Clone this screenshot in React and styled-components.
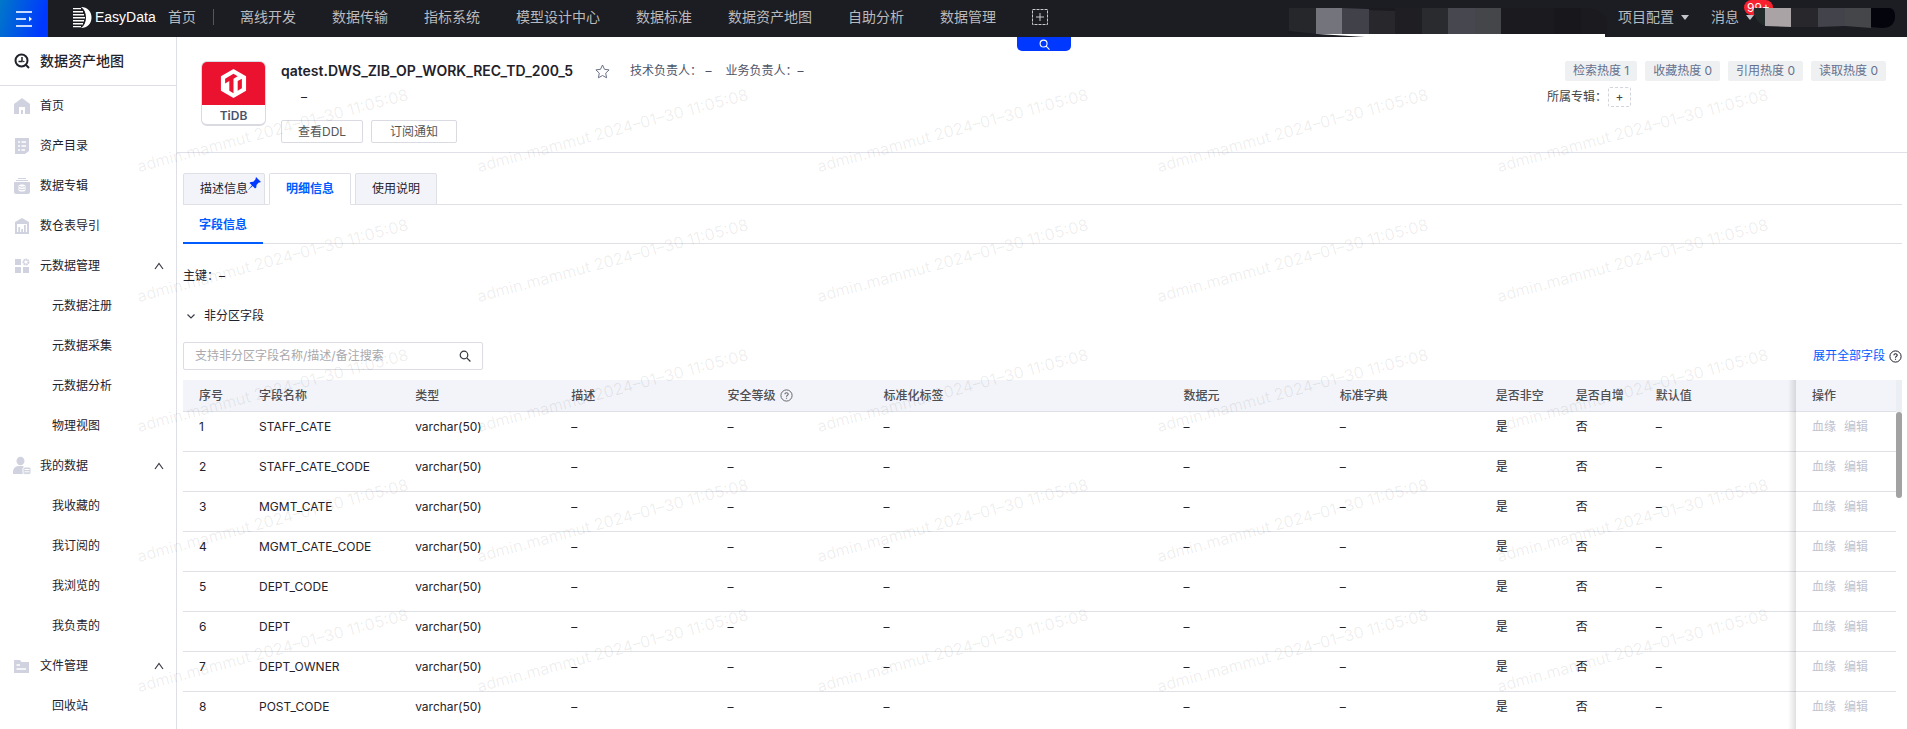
import React from 'react';
import styled, { createGlobalStyle } from 'styled-components';

const GlobalStyle = createGlobalStyle`
  *, *::before, *::after { box-sizing: border-box; }
  body {
    margin: 0;
    background: #fff;
    color: #1f222b;
    font: 12px/20px Inter, "Noto Sans CJK SC", sans-serif;
  }
  button, input { font: inherit; color: inherit; }
  button { padding: 0; border: 0; background: none; cursor: pointer; }
  a { color: inherit; text-decoration: none; }
  svg { display: block; flex: none; }
`;

const Shell = styled.div`
  position: relative;
  display: flex;
  flex-direction: column;
  height: 100vh;
  overflow: hidden;
`;

/* ---------- top bar ---------- */

const TopBar = styled.header`
  display: flex;
  align-items: flex-start;
  flex: none;
  height: 37px;
  background: #1c1d22;
  color: #b9babd;
  font-size: 14px;
  white-space: nowrap;
`;

const MenuButton = styled.button`
  display: flex;
  align-items: center;
  justify-content: center;
  width: 48px;
  height: 37px;
  background: linear-gradient(105deg, #0078c8, #0038ff 85%);
`;

const Brand = styled.a`
  display: flex;
  align-items: center;
  gap: 3px;
  width: 95px;
  height: 34px;
  margin-left: 25px;
  color: #fff;
  font: 14px/24px "Liberation Sans", sans-serif;
`;

const Nav = styled.nav`
  display: flex;
  align-items: center;
  gap: 36px;
  height: 34px;
`;

const HomeLink = styled.a`
  padding-right: 17px;
  margin-right: -10px;
  border-right: 1px solid #55565b;
  line-height: 16px;
`;

const TopRight = styled.div`
  display: flex;
  align-items: flex-start;
  margin-left: auto;
  padding-right: 12px;
  height: 37px;
`;

const DropButton = styled.button`
  position: relative;
  display: flex;
  align-items: center;
  gap: 7px;
  height: 34px;
  margin-left: ${(p) => p.$gap}px;
`;

const Badge = styled.span`
  position: absolute;
  left: 33px;
  top: 0;
  height: 15px;
  padding: 0 3px;
  border-radius: 8px;
  background: #f9202f;
  color: #fff;
  font-size: 12px;
  line-height: 15px;
`;

const UserMask = styled.div`
  position: relative;
`;

/* ---------- side bar ---------- */

const Body = styled.div`
  display: flex;
  flex: 1;
  min-height: 0;
`;

const Side = styled.aside`
  flex: none;
  width: 177px;
  border-right: 1px solid #dfe0e6;
  overflow: hidden;
`;

const SideTitle = styled.h2`
  display: flex;
  align-items: center;
  gap: 10px;
  height: 49px;
  margin: 0;
  padding-left: 14px;
  border-bottom: 1px solid #dfe0e6;
  font-size: 14px;
  font-weight: 500;
`;

const SideItem = styled.a`
  display: flex;
  align-items: center;
  gap: 8px;
  height: 40px;
  padding: 0 12px 0 ${(p) => (p.$child ? 52 : 12)}px;

  span { flex: 1; }
`;

/* ---------- main ---------- */

const Main = styled.main`
  position: relative;
  flex: 1;
  min-width: 0;
  overflow: hidden;
`;

const SearchTab = styled.button`
  position: absolute;
  top: 0;
  left: 840px;
  display: flex;
  align-items: center;
  justify-content: center;
  width: 54px;
  height: 14px;
  border-radius: 0 0 5px 5px;
  background: #0038ff;
`;

const Summary = styled.section`
  display: flex;
  height: 116px;
  padding: 24px 21px 0 24px;
  border-bottom: 1px solid #e0e1e8;
`;

const DbCard = styled.div`
  width: 65px;
  height: 65px;
  border: 1px solid #d9dae2;
  border-bottom-width: 2px;
  border-radius: 6px;
  overflow: hidden;
  text-align: center;
  color: #48536a;
  font-weight: 600;
  line-height: 22px;
`;

const DbLogo = styled.div`
  display: flex;
  align-items: center;
  justify-content: center;
  height: 43px;
  background: #eb1230;
`;

const Info = styled.div`
  flex: 1;
  padding-left: 15px;
`;

const InfoRow = styled.div`
  display: flex;
  align-items: center;
  height: 20px;
  color: #4d5468;
`;

const TableName = styled.h1`
  margin: 0 22px 0 0;
  color: #1f222b;
  font-size: 14px;
  font-weight: 600;
`;

const Owners = styled.div`
  display: flex;
  gap: 14px;
  margin-left: 20px;
`;

const Note = styled.p`
  margin: 6px 0 13px;
  padding-left: 20px;
`;

const ButtonRow = styled.div`
  display: flex;
  gap: 8px;
`;

const PlainButton = styled.button`
  height: 23px;
  padding: 0 ${(p) => p.$pad}px;
  border: 1px solid #d9dae2;
  border-radius: 2px;
  color: #555;
  line-height: 20px;
`;

const Heat = styled.div`
  width: 339px;
`;

const TagRow = styled.div`
  display: flex;
  justify-content: flex-end;
  gap: 8px;
`;

const Tag = styled.span`
  padding: 0 8px;
  border-radius: 2px;
  background: #eff0f2;
  color: #65708e;
`;

const AlbumRow = styled.div`
  display: flex;
  align-items: center;
  gap: 1px;
  height: 20px;
  margin-top: 6px;
  color: #444;
`;

const AddButton = styled.button`
  width: 23px;
  height: 20px;
  border: 1px dashed #d3d4db;
  border-radius: 2px;
  line-height: 18px;
`;

const Content = styled.section`
  padding: 20px 5px 0 6px;
`;

const Tabs = styled.div`
  display: flex;
  gap: 4px;
  border-bottom: 1px solid #dfe0e6;
`;

const Tab = styled.button`
  position: relative;
  width: 82px;
  height: 32px;
  margin-bottom: -1px;
  border: 1px solid #dfe0e6;
  border-bottom-color: ${(p) => (p.$on ? '#fff' : '#dfe0e6')};
  border-radius: 2px 2px 0 0;
  background: ${(p) => (p.$on ? '#fff' : '#f3f4f9')};
  color: ${(p) => (p.$on ? '#005cff' : 'inherit')};
  font-weight: ${(p) => (p.$on ? 600 : 400)};
`;

const PinMark = styled.span`
  position: absolute;
  top: 3px;
  right: 3px;
`;

const SubTabs = styled.div`
  border-bottom: 1px solid #dfe0e6;
`;

const SubTab = styled.button`
  display: block;
  width: 80px;
  height: 39px;
  margin-bottom: -1px;
  padding-top: 3px;
  border-bottom: 2px solid #005cff;
  color: #005cff;
  font-weight: 600;
`;

const KeyLine = styled.p`
  margin: 22px 0 20px;
`;

const GroupToggle = styled.button`
  display: flex;
  align-items: center;
  gap: 8px;
  margin-left: 3px;
`;

const Tools = styled.div`
  display: flex;
  align-items: center;
  justify-content: space-between;
  margin: 16px 0 10px;
`;

const SearchBox = styled.label`
  display: flex;
  align-items: center;
  width: 300px;
  height: 28px;
  padding: 0 11px;
  border: 1px solid #dcdde4;
  border-radius: 2px;

  input {
    flex: 1;
    min-width: 0;
    padding: 0;
    border: 0;
    outline: 0;
    background: none;
  }
  input::placeholder { color: #a9a9ad; opacity: 1; }
`;

const ExpandLink = styled.a`
  display: flex;
  align-items: center;
  gap: 4px;
  color: #005cff;
`;

const TableArea = styled.div`
  display: flex;
`;

const Grid = styled.table`
  flex: 1;
  width: 0;
  table-layout: fixed;
  border-collapse: separate;
  border-spacing: 0;
`;

const Th = styled.th`
  position: relative;
  height: 32px;
  padding: 0 16px;
  border-bottom: 1px solid #dfe0e6;
  background: #f3f4f9;
  color: #4f4f52;
  font-weight: 500;
  text-align: left;
`;

const Td = styled.td`
  position: relative;
  height: 40px;
  padding: 5px 16px 0;
  border-bottom: 1px solid #dfe0e6;
  vertical-align: top;
  white-space: nowrap;
`;

const pinnedShade = `
  &::before {
    content: "";
    position: absolute;
    top: 0;
    bottom: -1px;
    left: -8px;
    width: 8px;
    background: linear-gradient(to right, rgba(0,0,0,0), rgba(0,0,0,.12));
  }
`;

const PinnedTh = styled(Th)`${pinnedShade}`;
const PinnedTd = styled(Td)`${pinnedShade}`;

const HeadLabel = styled.span`
  display: flex;
  align-items: center;
  gap: 5px;
`;

const RowAction = styled.button`
  margin-right: 8px;
  color: #bfc3cf;
`;

const ScrollTrack = styled.div`
  width: 6px;
  padding-top: 32px;
  background: linear-gradient(#ebeef3 32px, #fff 32px);
`;

const ScrollThumb = styled.div`
  height: 86px;
  border-radius: 3px;
  background: #a2a2a2;
`;

const Watermarks = styled.div`
  position: absolute;
  top: 46px;
  left: 140px;
  display: grid;
  grid-template-columns: repeat(5, 340px);
  grid-auto-rows: 130px;
  align-items: end;
  pointer-events: none;
  user-select: none;
`;

const Mark = styled.span`
  color: rgba(0, 0, 0, 0.07);
  font-size: 16px;
  line-height: 20px;
  white-space: nowrap;
  transform: rotate(-15deg);
  transform-origin: 0 100%;
`;

/* ---------- icons ---------- */

const Chevron = ({ up }) => (
  <svg width="10" height="10" viewBox="0 0 10 10" fill="none" stroke="#3a3d46" strokeWidth="1.2">
    <path d={up ? 'M1 8 5 2.500 9 8' : 'M1.500 3.500 5 7 8.500 3.500'} />
  </svg>
);

const Caret = () => (
  <svg width="8" height="5" viewBox="0 0 8 5" fill="#c4c5c8"><path d="M0 0h8L4 5z" /></svg>
);

const Lens = ({ color, size = 12 }) => (
  <svg width={size} height={size} viewBox="0 0 12 12" fill="none" stroke={color} strokeWidth="1.200">
    <circle cx="5" cy="5" r="3.800" /><path d="m7.800 7.800 3.600 3.700" />
  </svg>
);

const Help = ({ color }) => (
  <svg width="13" height="13" viewBox="0 0 13 13" fill="none" stroke={color}>
    <circle cx="6.500" cy="6.500" r="5.600" />
    <path d="M4.900 5.300c0-2.100 3.300-2.100 3.300-.1 0 1.200-1.700 1.200-1.700 2.500M6.500 8.700v1.100" strokeWidth="1.100" />
  </svg>
);

const BrandMark = () => (
  <svg width="19" height="21" viewBox="0 0 19 21" fill="#fff">
    <path d="M8 0c6.500 0 10.500 4.500 10.500 10.500S14.500 21 8 21c3.600-2.500 5-6.300 5-10.500S11.600 2.500 8 0z" />
    <path d="M0 1h8v1.300H0zM0 4h10v1.400H0zM0 7h11v1.400H0zM0 10h12v1.400H0zM0 13h11v1.400H0zM0 16h10v1.400H0zM0 19h8v1.300H0z" />
  </svg>
);

const sideIcons = {
  home: (
    <>
      <path d="M10 2 2 8v10h16V8z" />
      <path d="M7 18v-7h6v7h-2v-4H9v4z" fill="#fff" />
    </>
  ),
  catalog: (
    <>
      <path d="M3 2h14v13l-4 3H3z" />
      <path d="M6 6h2M9.500 6H14M6 10h2M9.500 10H14M6 14h2M9.500 14H13" stroke="#fff" strokeWidth="1.300" />
    </>
  ),
  album: (
    <>
      <path d="M6 2h8v1H6zM4 4h12v1H4zM2 7q0-1 1-1h14q1 0 1 1v9q0 2-2 2H4q-2 0-2-2z" />
      <path d="M6.500 10c0-2 7-2 7 0v4c0 2-7 2-7 0z" fill="#fff" />
      <path d="M7 10.500q3 1.500 6 0M7 13q3 1.500 6 0" stroke="#d0d3df" fill="none" />
    </>
  ),
  guide: (
    <>
      <path d="M10 2 3 6v12h14V6z" />
      <path d="M5 8h10v8H5z" fill="#fff" />
      <path d="M6.300 11h1.800v5H6.300zM9.200 13H11v3H9.200zM12 9h1.800v7H12z" />
    </>
  ),
  meta: (
    <>
      <path d="M3 3h6v6H3zM3 11h6v6H3zM11 11h6v6h-6z" />
      <circle cx="14" cy="6" r="2.500" fill="none" stroke="#d0d3df" strokeWidth="2" strokeDasharray="1.800 .4" />
    </>
  ),
  mine: (
    <>
      <ellipse cx="8.500" cy="5" rx="4" ry="4.300" />
      <path d="M1 18v-3q1-5 6-5h4.500v8z" />
      <path d="M11 12.500c0-2 8-2 8 0v4.500c0 2-8 2-8 0z" stroke="#fff" />
      <path d="M12.500 13.500h5M12.500 15.800h5" stroke="#fff" />
    </>
  ),
  files: (
    <>
      <path d="M2 4h6l1.500 2H17v11H2z" />
      <path d="M4.500 9H8M4.500 13H14" stroke="#fff" strokeWidth="1.300" />
    </>
  ),
};

const SideIcon = ({ name }) => (
  <svg width="20" height="20" viewBox="0 0 20 20" fill="#d0d3df">{sideIcons[name]}</svg>
);

/* ---------- data ---------- */

const navItems = ['离线开发', '数据传输', '指标系统', '模型设计中心', '数据标准', '数据资产地图', '自助分析', '数据管理'];

const sideItems = [
  { label: '首页', icon: 'home' },
  { label: '资产目录', icon: 'catalog' },
  { label: '数据专辑', icon: 'album' },
  { label: '数仓表导引', icon: 'guide' },
  { label: '元数据管理', icon: 'meta', open: true },
  { label: '元数据注册' },
  { label: '元数据采集' },
  { label: '元数据分析' },
  { label: '物理视图' },
  { label: '我的数据', icon: 'mine', open: true },
  { label: '我收藏的' },
  { label: '我订阅的' },
  { label: '我浏览的' },
  { label: '我负责的' },
  { label: '文件管理', icon: 'files', open: true },
  { label: '回收站' },
];

const columns = [
  { label: '序号', width: 60 },
  { label: '字段名称' },
  { label: '类型' },
  { label: '描述' },
  { label: '安全等级', help: true },
  { label: '标准化标签', width: 300 },
  { label: '数据元' },
  { label: '标准字典' },
  { label: '是否非空', width: 80 },
  { label: '是否自增', width: 80 },
  { label: '默认值' },
];

const fields = ['STAFF_CATE', 'STAFF_CATE_CODE', 'MGMT_CATE', 'MGMT_CATE_CODE', 'DEPT_CODE', 'DEPT', 'DEPT_OWNER', 'POST_CODE'];

const heat = ['检索热度 1', '收藏热度 0', '引用热度 0', '读取热度 0'];

const ProjectMask = () => (
  <svg width="320" height="37" viewBox="0 0 320 37">
    <path d="M2 8h300q20 5 20 20v6H2z" fill="#1b1a1e" />
    <path d="M2 8h27v26L2 31z" fill="#26272b" />
    <path d="M29 8h26v26H29z" fill="#74747c" />
    <path d="M55 8l27 1v25H55z" fill="#41414a" />
    <path d="M82 10l26 1v23H82z" fill="#28272c" />
    <path d="M108 8h27v26h-27z" fill="#1f1e22" />
    <path d="M135 8h26v26h-26z" fill="#2a2b2f" />
    <path d="M161 8h27v26h-27z" fill="#474750" />
    <path d="M188 8h26v26h-26z" fill="#454649" />
    <path d="M267 8h27v26h-27z" fill="#18171b" />
    <path d="M31 34h287v3H78z" fill="#fff" />
  </svg>
);

const AccountMask = () => (
  <svg width="141" height="37" viewBox="0 0 141 37">
    <path d="M0 8h12v18Q3 24 0 14z" fill="#222a2a" />
    <path d="M11 8h26v19l-26-1z" fill="#aaa3a6" />
    <path d="M37 8h27v19H37z" fill="#28272c" />
    <path d="M64 8h27v18l-27 1z" fill="#42434b" />
    <path d="M91 8h26v20l-26-2z" fill="#454649" />
    <path d="M117 8h19q5 1 5 8 0 12-13 12l-11-1z" fill="#04040d" />
  </svg>
);

export default function App() {
  return (
    <Shell>
      <GlobalStyle />
      <TopBar>
        <MenuButton aria-label="菜单">
          <svg width="16" height="18" viewBox="0 0 16 18" fill="none" stroke="#c9dcff" strokeWidth="2">
            <path d="M0 2h16M0 9h10M0 16h16" /><path d="m13 6.500 3 2.500-3 2.500z" fill="#fff" stroke="none" />
          </svg>
        </MenuButton>
        <Brand href="#"><BrandMark />EasyData</Brand>
        <Nav>
          <HomeLink href="#">首页</HomeLink>
          {navItems.map((n) => <a key={n} href="#">{n}</a>)}
          <button aria-label="添加">
            <svg width="16" height="16" viewBox="0 0 16 16" fill="none" stroke="#c9cacc">
              <rect x=".5" y=".5" width="15" height="15" strokeDasharray="3 1" /><path d="M4 8h8M8 4v8" />
            </svg>
          </button>
        </Nav>
        <TopRight>
          <ProjectMask />
          <DropButton $gap={11}>项目配置<Caret /></DropButton>
          <DropButton $gap={22}>消息<Caret /><Badge>99+</Badge></DropButton>
          <UserMask><AccountMask /></UserMask>
        </TopRight>
      </TopBar>

      <Body>
        <Side>
          <SideTitle>
            <svg width="16" height="16" viewBox="0 0 16 16" fill="none" stroke="#1f222b" strokeWidth="2">
              <circle cx="7.500" cy="7.500" r="6" /><path d="m11.500 11.500 3.500 3.500" />
              <path d="M8 4v4.500H4.500" strokeWidth="1.500" /><circle cx="9.800" cy="8.500" r=".8" fill="#1f222b" stroke="none" />
            </svg>
            数据资产地图
          </SideTitle>
          {sideItems.map((s) => (
            <SideItem key={s.label} href="#" $child={!s.icon}>
              {s.icon && <SideIcon name={s.icon} />}
              <span>{s.label}</span>
              {s.open && <Chevron up />}
            </SideItem>
          ))}
        </Side>

        <Main>
          <Summary>
            <DbCard>
              <DbLogo>
                <svg width="29" height="29" viewBox="0 0 24 24">
                  <path d="M12 0 1.600 6v12L12 24l10.400-6V6z" fill="#fff" />
                  <path d="m12 4 3.460 2L12 8v12l-3.460-2v-8l-3.470 2V8zM15.460 10l3.470-2v8l-3.470 2z" fill="#eb1230" />
                </svg>
              </DbLogo>
              TiDB
            </DbCard>
            <Info>
              <InfoRow>
                <TableName>qatest.DWS_ZIB_OP_WORK_REC_TD_200_5</TableName>
                <button aria-label="收藏">
                  <svg width="15" height="15" viewBox="0 0 15 15" fill="none" stroke="#6b7286">
                    <path d="m7.500 1 2 4.300 4.600.6-3.400 3.200.9 4.700-4.100-2.300-4.100 2.300.9-4.700L.9 5.900l4.600-.6z" />
                  </svg>
                </button>
                <Owners>
                  <span>技术负责人：&nbsp;–</span>
                  <span>业务负责人：–</span>
                </Owners>
              </InfoRow>
              <Note>–</Note>
              <ButtonRow>
                <PlainButton $pad={16}>查看DDL</PlainButton>
                <PlainButton $pad={18}>订阅通知</PlainButton>
              </ButtonRow>
            </Info>
            <Heat>
              <TagRow>{heat.map((h) => <Tag key={h}>{h}</Tag>)}</TagRow>
              <AlbumRow>所属专辑：<AddButton aria-label="添加专辑">+</AddButton></AlbumRow>
            </Heat>
          </Summary>

          <Content>
            <Tabs>
              <Tab>
                描述信息
                <PinMark>
                  <svg width="13" height="13" viewBox="0 0 13 13" fill="#0038ff">
                    <path d="m8 0 5 5-1.500.6-1 .2-2 2.200-.2 2.500L7 11.500 4.700 9 0 13l3.900-4.800L1.500 6l1.200-1.100 2.600-.1L7.400 2.600z" />
                  </svg>
                </PinMark>
              </Tab>
              <Tab $on>明细信息</Tab>
              <Tab>使用说明</Tab>
            </Tabs>
            <SubTabs><SubTab>字段信息</SubTab></SubTabs>
            <KeyLine>主键：–</KeyLine>
            <GroupToggle><Chevron />非分区字段</GroupToggle>
            <Tools>
              <SearchBox>
                <input type="text" aria-label="搜索字段" placeholder="支持非分区字段名称/描述/备注搜索" />
                <Lens color="#33363f" />
              </SearchBox>
              <ExpandLink href="#">展开全部字段<Help color="#1f222b" /></ExpandLink>
            </Tools>

            <TableArea>
              <Grid>
                <colgroup>
                  {columns.map((c) => <col key={c.label} width={c.width} />)}
                  <col width="100" />
                </colgroup>
                <thead>
                  <tr>
                    {columns.map((c) => (
                      <Th key={c.label}>
                        <HeadLabel>{c.label}{c.help && <Help color="#66676c" />}</HeadLabel>
                      </Th>
                    ))}
                    <PinnedTh>操作</PinnedTh>
                  </tr>
                </thead>
                <tbody>
                  {fields.map((f, i) => (
                    <tr key={f}>
                      <Td>{i + 1}</Td>
                      <Td>{f}</Td>
                      <Td>varchar(50)</Td>
                      <Td>–</Td>
                      <Td>–</Td>
                      <Td>–</Td>
                      <Td>–</Td>
                      <Td>–</Td>
                      <Td>是</Td>
                      <Td>否</Td>
                      <Td>–</Td>
                      <PinnedTd>
                        <RowAction>血缘</RowAction>
                        <RowAction>编辑</RowAction>
                      </PinnedTd>
                    </tr>
                  ))}
                </tbody>
              </Grid>
              <ScrollTrack><ScrollThumb /></ScrollTrack>
            </TableArea>
          </Content>
          <SearchTab aria-label="搜索"><Lens color="#fff" size={11} /></SearchTab>
        </Main>
      </Body>

      <Watermarks aria-hidden="true">
        {Array.from({ length: 25 }, (_, i) => <Mark key={i}>admin.mammut 2024–01–30 11:05:08</Mark>)}
      </Watermarks>
    </Shell>
  );
}
